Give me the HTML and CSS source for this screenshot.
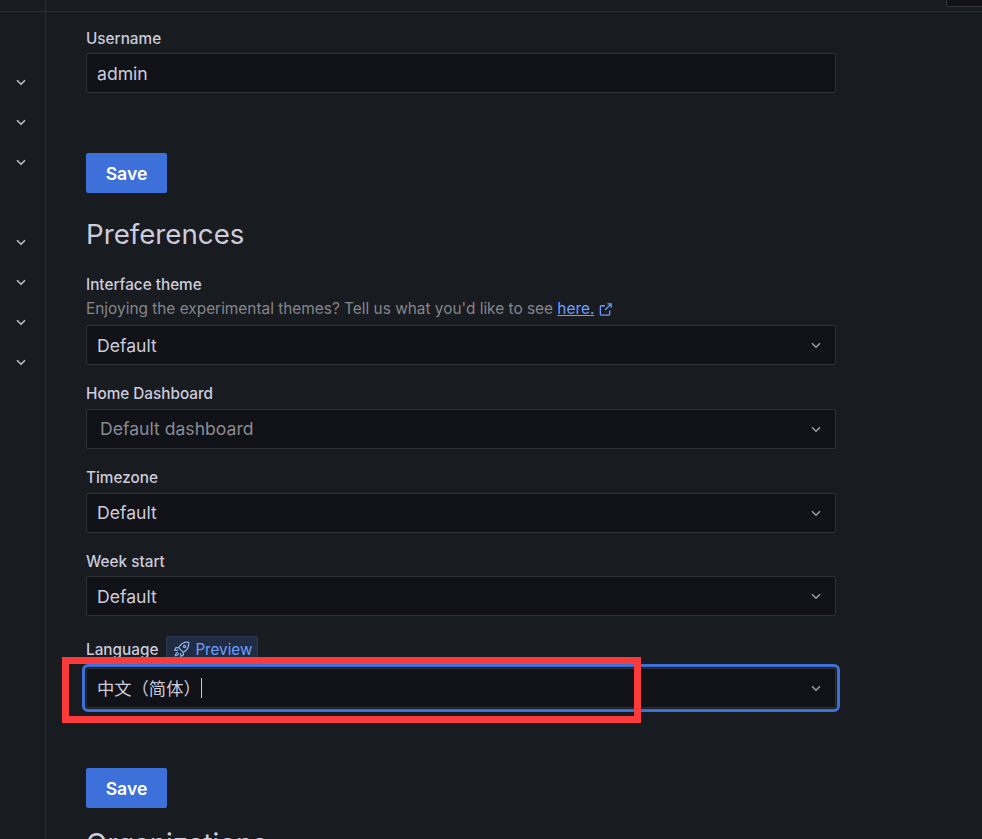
FILE: index.html
```html
<!DOCTYPE html>
<html lang="en">
<head>
<meta charset="utf-8">
<title>Profile</title>
<link rel="stylesheet" href="styles.css">
</head>
<body>
<header class="topbar">
  <div class="topbar-rail"></div>
  <div class="topbar-corner"></div>
</header>
<div class="shell">
  <nav class="rail">
    <ul class="rail-group">
      <li><svg class="chev rail-chev" viewBox="0 0 24 24"><path d="M6 9.500l6 6 6-6"/></svg></li>
      <li><svg class="chev rail-chev" viewBox="0 0 24 24"><path d="M6 9.500l6 6 6-6"/></svg></li>
      <li><svg class="chev rail-chev" viewBox="0 0 24 24"><path d="M6 9.500l6 6 6-6"/></svg></li>
    </ul>
    <ul class="rail-group rail-group-second">
      <li><svg class="chev rail-chev" viewBox="0 0 24 24"><path d="M6 9.500l6 6 6-6"/></svg></li>
      <li><svg class="chev rail-chev" viewBox="0 0 24 24"><path d="M6 9.500l6 6 6-6"/></svg></li>
      <li><svg class="chev rail-chev" viewBox="0 0 24 24"><path d="M6 9.500l6 6 6-6"/></svg></li>
      <li><svg class="chev rail-chev" viewBox="0 0 24 24"><path d="M6 9.500l6 6 6-6"/></svg></li>
    </ul>
  </nav>
  <main class="content">
    <section class="field field-user">
      <label class="label">Username</label>
      <div class="input input-low">admin</div>
    </section>
    <button class="save">Save</button>
    <h2 class="heading">Preferences</h2>

    <section class="field">
      <label class="label">Interface theme</label>
      <p class="hint">Enjoying the experimental themes? Tell us what you'd like to see <a class="link">here.</a><svg class="ext" viewBox="0 0 16 16"><path d="M12.500 9v3.800a1.200 1.200 0 0 1-1.200 1.200H3.700a1.200 1.200 0 0 1-1.200-1.200V5.200A1.200 1.200 0 0 1 3.700 4h3.800M10 2h4v4M14 2L7.500 8.500"/></svg></p>
      <div class="input select input-low">Default<svg class="chev" viewBox="0 0 24 24"><path d="M6 9.500l6 6 6-6"/></svg></div>
    </section>
    <section class="field">
      <label class="label">Home Dashboard</label>
      <div class="input select placeholder">Default dashboard<svg class="chev" viewBox="0 0 24 24"><path d="M6 9.500l6 6 6-6"/></svg></div>
    </section>
    <section class="field">
      <label class="label">Timezone</label>
      <div class="input select">Default<svg class="chev" viewBox="0 0 24 24"><path d="M6 9.500l6 6 6-6"/></svg></div>
    </section>
    <section class="field field-week">
      <label class="label">Week start</label>
      <div class="input select input-low">Default<svg class="chev" viewBox="0 0 24 24"><path d="M6 9.500l6 6 6-6"/></svg></div>
    </section>
    <section class="field field-lang">
      <div class="label-row">
        <label class="label label-lang">Language</label>
        <span class="badge"><svg class="rocket" viewBox="0 0 16 16"><path d="M14 2c-4-.3-7 1.200-9 4.800l4.200 4.200C12.800 9 14.300 6 14 2zM5 6.800H2.600L1.500 9l3 .3M9.200 11v2.400L7 14.500l-.3-3M4.300 10.800c-1.300.5-2 1.500-2.300 3.200 1.700-.3 2.700-1 3.200-2.300"/><circle cx="10.300" cy="5.700" r="1"/></svg>Preview</span>
      </div>
      <div class="input select focused"><span class="lang-value" lang="zh-CN">中文（简体）</span><span class="caret"></span><svg class="chev" viewBox="0 0 24 24"><path d="M6 9.500l6 6 6-6"/></svg></div>
      <div class="annotation"></div>
    </section>
    <button class="save save-second">Save</button>
    <h2 class="heading heading-org">Organizations</h2>
  </main>
</div>
</body>
</html>
```
FILE: styles.css
```css
* { box-sizing: border-box; }
html, body { margin: 0; padding: 0; height: 839px; overflow: hidden; }
body {
  background: #181b1f;
  color: #ccccdc;
  font-family: Inter, "Noto Sans CJK SC", sans-serif;
  font-size: 14px;
}
.topbar {
  height: 12px;
  border-bottom: 1px solid #2b2d32;
  display: flex;
  justify-content: space-between;
}
.topbar-rail { width: 46px; border-right: 1px solid #2b2d32; }
.topbar-corner {
  width: 36px;
  height: 7px;
  background: #111217;
  border: 1px solid #34363b;
  border-top: 0;
  border-right: 0;
  border-bottom-left-radius: 2px;
}
.shell { display: flex; height: 827px; }
.rail { width: 46px; border-right: 1px solid #2b2d32; flex: none; padding-top: 50px; }
.rail-group { list-style: none; margin: 0; padding: 0; }
.rail-group li { height: 40px; padding-left: 13px; display: flex; align-items: center; }
.rail-group-second { margin-top: 40px; }
.content { flex: none; width: 750px; margin-left: 40px; padding-top: 17px; position: relative; }
.label { display: block; font-size: 15.3px; font-weight: 500; line-height: 20px; color: #ccccdc; }
.label-lang { padding-top: 1px; }
.field { margin-bottom: 19px; }
.field-user { margin-bottom: 60px; }
.field-week { margin-bottom: 20px; }
.field .label + .input { margin-top: 5px; }
.field-user .label + .input,
.field-week .label + .input { margin-top: 4px; }
.input {
  height: 40px;
  background: #111217;
  border: 1px solid #2f3136;
  border-radius: 2px;
  padding-left: 10px;
  font-size: 17.6px;
  line-height: 38px;
  color: #ccccdc;
  display: flex;
  align-items: center;
}
.input-low { padding-top: 1px; }
.select .chev { margin-left: auto; margin-right: 11px; }
.input-low .chev { margin-top: -1px; }
.placeholder { color: #8a8b92; padding-left: 13px; }
.chev { width: 16px; height: 16px; fill: none; stroke: #a3a4ad; stroke-width: 2; flex: none; }
.rail-chev { width: 16px; height: 16px; stroke: #c4c5d2; stroke-width: 2.2; }
.save {
  display: block;
  width: 81px;
  height: 40px;
  border: 0;
  border-radius: 2px;
  background: #3d71d9;
  color: #fff;
  font-family: inherit;
  font-size: 17.6px;
  font-weight: 600;
  padding: 0;
}
.heading { margin: 20px 0 20px; font-size: 27.7px; font-weight: 400; line-height: 42px; height: 42px; color: #ccccdc; }
.hint { margin: 4px 0 6px; font-size: 15.4px; line-height: 20px; color: #85868d; display: flex; align-items: center; white-space: pre-wrap; }
.link { color: #6e9fff; text-decoration: underline; }
.ext { width: 15px; height: 15px; margin-left: 4px; fill: none; stroke: #6e9fff; stroke-width: 1.4; }
.label-row { display: flex; align-items: center; gap: 8px; height: 26px; margin-top: 1px; margin-bottom: 6px; }
.badge {
  display: inline-flex;
  align-items: center;
  gap: 4px;
  height: 26px;
  padding: 0 5px 0 6px;
  background: #1f2c42;
  border: 1px solid #2a3a55;
  border-radius: 2px;
  font-size: 15.2px;
  color: #6e9fff;
}
.rocket { width: 18px; height: 18px; fill: none; stroke: #8ab0f0; stroke-width: 1.1; }
.field-lang { position: relative; margin-bottom: 60px; }
.focused { outline: 3px solid #3d71d9; outline-offset: 1px; border-radius: 2px; }
.lang-value { font-family: "Noto Sans CJK SC", sans-serif; font-size: 17.3px; }
.caret { width: 1px; height: 20px; background: #ccccdc; }
.annotation {
  position: absolute;
  left: -24px;
  top: 21px;
  width: 579px;
  height: 66px;
  border: 7px solid #fb3b3b;
  pointer-events: none;
}
.heading-org { margin-top: 14px; }
```
